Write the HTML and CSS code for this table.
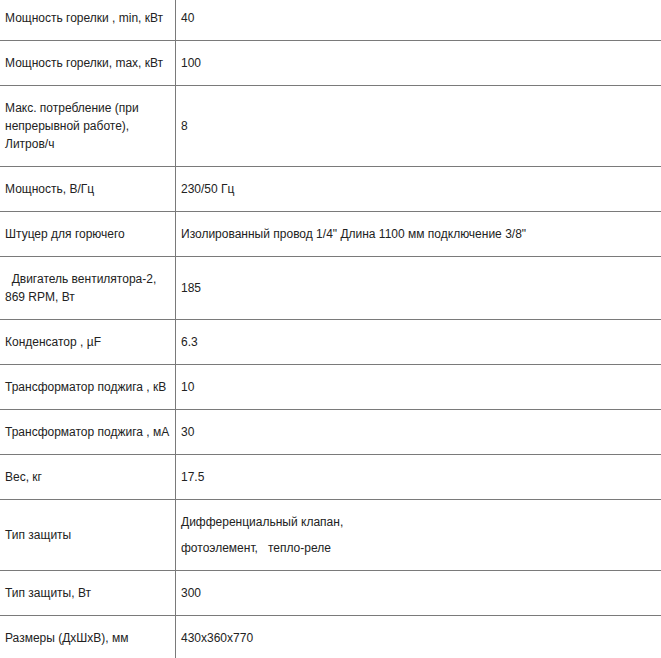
FILE: index.html
```html
<!DOCTYPE html>
<html lang="ru">
<head>
<meta charset="utf-8">
<title>Характеристики</title>
<link rel="stylesheet" href="styles.css">
</head>
<body>
<table class="specs">
  <tbody>
    <tr><td class="name">Мощность горелки , min, кВт</td><td class="val">40</td></tr>
    <tr><td class="name">Мощность горелки, max, кВт</td><td class="val">100</td></tr>
    <tr><td class="name">Макс. потребление (при непрерывной работе), Литров/ч</td><td class="val">8</td></tr>
    <tr><td class="name">Мощность, В/Гц</td><td class="val">230/50 Гц</td></tr>
    <tr><td class="name">Штуцер для горючего</td><td class="val">Изолированный провод 1/4" Длина 1100 мм подключение 3/8"</td></tr>
    <tr><td class="name">&nbsp; Двигатель вентилятора-2, 869 RPM, Вт</td><td class="val">185</td></tr>
    <tr><td class="name">Конденсатор , µF</td><td class="val">6.3</td></tr>
    <tr><td class="name">Трансформатор поджига , кВ</td><td class="val">10</td></tr>
    <tr><td class="name">Трансформатор поджига , мА</td><td class="val">30</td></tr>
    <tr><td class="name">Вес, кг</td><td class="val">17.5</td></tr>
    <tr><td class="name">Тип защиты</td><td class="val"><p class="para">Дифференциальный клапан,</p><p class="para second">фотоэлемент, &nbsp; тепло-реле</p></td></tr>
    <tr><td class="name">Тип защиты, Вт</td><td class="val">300</td></tr>
    <tr><td class="name">Размеры (ДхШхВ), мм</td><td class="val">430x360x770</td></tr>
  </tbody>
</table>
</body>
</html>
```
FILE: styles.css
```css
html, body {
  margin: 0;
  padding: 0;
  background: #fff;
}
body {
  font-family: "Liberation Sans", Arial, sans-serif;
  font-size: 12px;
  line-height: 18px;
  color: #222;
}
.specs {
  width: 100%;
  border-collapse: collapse;
  margin-top: -5px;
  table-layout: fixed;
}
.specs td {
  border-top: 1px solid #7a7a7a;
  border-bottom: 1px solid #7a7a7a;
  padding: 13px 5px;
  vertical-align: middle;
  text-align: left;
}
.specs td.name {
  width: 165px;
  border-right: 1px solid #7a7a7a;
}
.specs td.val {
  padding-left: 5px;
}
.para {
  margin: 0;
}
.para.second {
  margin-top: 8px;
}
```
